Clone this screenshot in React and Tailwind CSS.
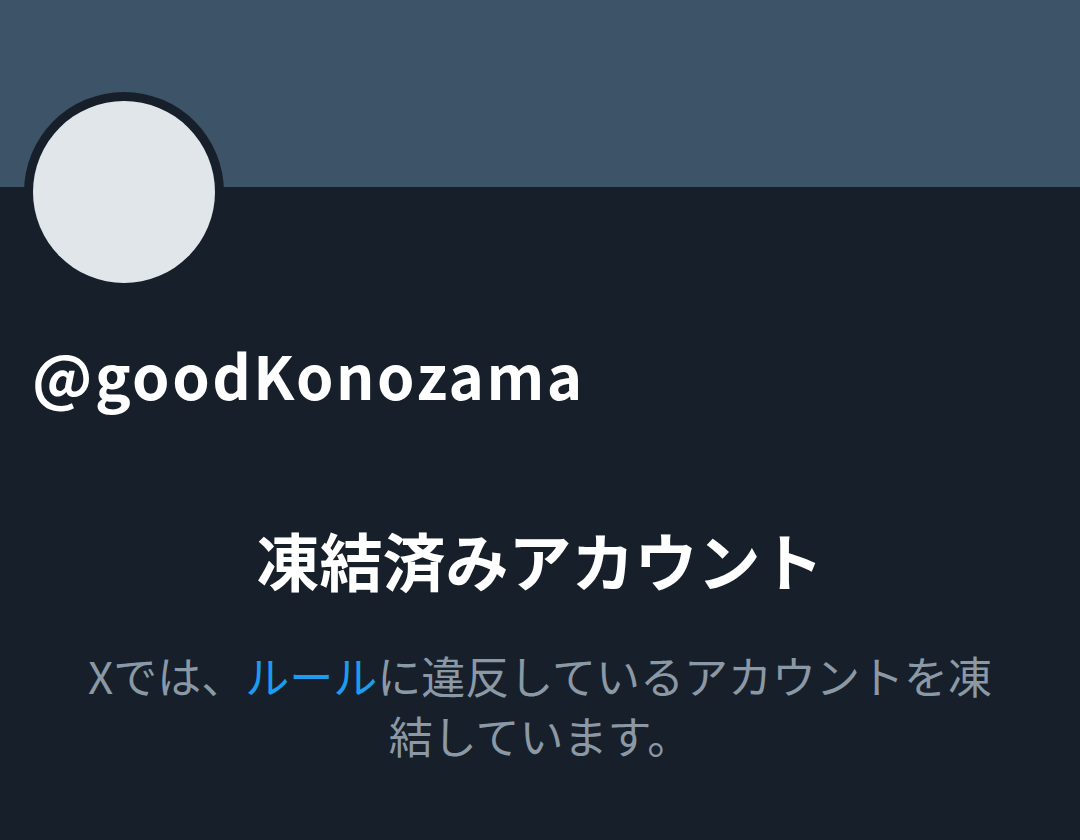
export default function App() {
  return (
    <div
      className="w-[1080px] h-[840px] overflow-hidden bg-[#17202a]"
      style={{ fontFamily: '"Noto Sans CJK JP", "Noto Sans", sans-serif' }}
    >
      {/* Banner */}
      <div className="h-[187px] bg-[#3d5367]" />

      {/* Avatar */}
      <div className="ml-[24px] -mt-[95px] w-[200px] h-[200px] rounded-full bg-[#17202a] p-[9px]">
        <div className="w-full h-full rounded-full bg-[#e1e6ea]" />
      </div>

      {/* Handle */}
      <div className="mt-[46px] ml-[32px] text-[60px] leading-[72px] font-bold text-white tracking-[2.5px]">
        @goodKonozama
      </div>

      {/* Suspended notice */}
      <div className="mt-[107px] flex flex-col items-center px-[80px] text-center">
        <h1 className="text-[63px] leading-[84px] font-bold text-white">凍結済みアカウント</h1>
        <p className="mt-[44px] text-[44px] leading-[60px] text-[#8b98a5]">
          Xでは、<span className="text-[#1d9bf0]">ルール</span>に違反しているアカウントを凍結しています。
        </p>
      </div>
    </div>
  )
}
